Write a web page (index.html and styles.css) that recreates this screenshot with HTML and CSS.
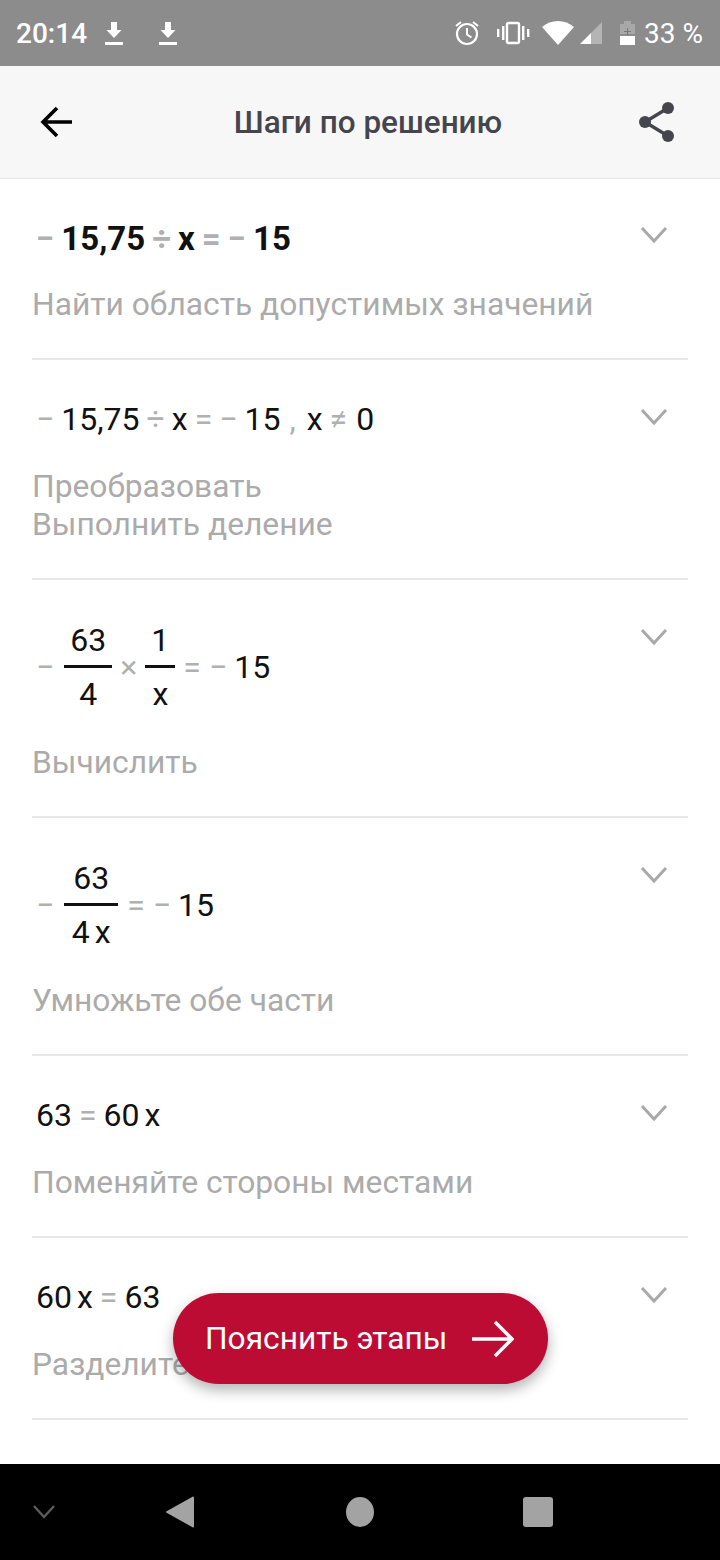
FILE: index.html
```html
<!DOCTYPE html>
<html lang="ru">
<head>
    <meta charset="UTF-8">
    <meta name="viewport" content="width=device-width, initial-scale=1.0">
    <title>Шаги по решению</title>
    <link rel="stylesheet" href="styles.css">
</head>
<body>
    <div class="app">
        <div class="status-bar">
            <span class="status-time">20:14</span>
            <svg class="dl-icon" width="18" height="26" viewBox="0 0 18 26"><path d="M6 2h6v8h4.500L9 18 1.500 10H6z" fill="#fff"/><rect y="22" width="18" height="3" fill="#fff"/></svg>
            <svg class="dl-icon dl-icon-second" width="18" height="26" viewBox="0 0 18 26"><path d="M6 2h6v8h4.500L9 18 1.500 10H6z" fill="#fff"/><rect y="22" width="18" height="3" fill="#fff"/></svg>
            <div class="status-right">
                <svg class="alarm-icon" width="24" height="26" viewBox="0 0 24 26" fill="none" stroke="#fff"><circle cx="12" cy="14" r="10" stroke-width="2.2"/><path d="M12 8v6.500l4.500 3M1 6l5-4M23 6l-5-4" stroke-width="2"/></svg>
                <svg class="vib-icon" width="34" height="24" viewBox="0 0 34 24" fill="none"><rect x="11" y="2" width="12" height="20" rx="1.500" stroke="#fff" stroke-width="2.400"/><path d="M6 5h2.400v14H6zM26 5h2.400v14H26zM1 8h2.400v8H1zM31 8h2.400v8H31z" fill="#fff"/></svg>
                <svg class="wifi-icon" width="32" height="26" viewBox="0 0 32 26"><path d="M0 7C9 -1 23 -1 32 7L16 25z" fill="#fff"/></svg>
                <svg class="signal-icon" width="23" height="24" viewBox="0 0 23 24"><path d="M23 1v22H12V12z" fill="#b4b4b4"/><path d="M12 12v11H1z" fill="#fff"/></svg>
                <svg class="battery-icon" width="15" height="26" viewBox="0 0 15 26"><path d="M4 1h7v3h4v10H0V4h4z" fill="#a8a8a8"/><rect y="16" width="15" height="9" fill="#fff"/><path d="M7 8h1v3h3v1H8v3H7v-3H4v-1h3z" fill="#777"/></svg>
                <span class="status-pct">33 %</span>
            </div>
        </div>

        <div class="header">
            <svg width="34" height="32" viewBox="0 0 34 32" fill="none" stroke="#000" stroke-width="3.600"><path d="M33 16H4M18 2L4 16l14 14"/></svg>
            <div class="header-title">Шаги по решению</div>
            <svg width="38" height="42" viewBox="0 0 38 42" fill="#45454d" stroke="#45454d"><path d="M30 7L7 21l23 14" fill="none" stroke-width="3.400"/><circle cx="30" cy="7" r="6" stroke="none"/><circle cx="7" cy="21" r="6" stroke="none"/><circle cx="30" cy="35" r="6" stroke="none"/></svg>
        </div>

        <div class="steps">
            <div class="step">
                <div class="step-body">
                    <div class="expr expr-bold">
                        <span class="op">−</span><span>15,75</span><span class="op">÷</span><span>x</span><span class="op">=</span><span class="op">−</span><span>15</span>
                    </div>
                    <div class="step-label">Найти область допустимых значений</div>
                </div>
                <svg class="chevron" width="28" height="18" viewBox="0 0 28 18" fill="none" stroke="#a9a9a9" stroke-width="3"><path d="M2 2l12 13L26 2"/></svg>
            </div>

            <div class="step">
                <div class="step-body">
                    <div class="expr">
                        <span class="op">−</span><span>15,75</span><span class="op">÷</span><span>x</span><span class="op">=</span><span class="op">−</span><span>15</span><span class="op comma">,</span><span>x</span><span class="op">≠</span><span class="last-num">0</span>
                    </div>
                    <div class="step-label">Преобразовать<br>Выполнить деление</div>
                </div>
                <svg class="chevron" width="28" height="18" viewBox="0 0 28 18" fill="none" stroke="#a9a9a9" stroke-width="3"><path d="M2 2l12 13L26 2"/></svg>
            </div>

            <div class="step">
                <div class="step-body">
                    <div class="expr expr-frac">
                        <span class="op lead-minus">−</span>
                        <div class="frac"><span class="frac-top">63</span><span class="frac-bottom">4</span></div>
                        <span class="op">×</span>
                        <div class="frac"><span class="frac-top">1</span><span class="frac-bottom">x</span></div>
                        <span class="op">=</span><span class="op">−</span><span class="tight">15</span>
                    </div>
                    <div class="step-label">Вычислить</div>
                </div>
                <svg class="chevron" width="28" height="18" viewBox="0 0 28 18" fill="none" stroke="#a9a9a9" stroke-width="3"><path d="M2 2l12 13L26 2"/></svg>
            </div>

            <div class="step">
                <div class="step-body">
                    <div class="expr expr-frac">
                        <span class="op lead-minus">−</span>
                        <div class="frac frac-wide"><span class="frac-top">63</span><span class="frac-bottom">4<span class="var-gap">x</span></span></div>
                        <span class="op">=</span><span class="op">−</span><span class="tight">15</span>
                    </div>
                    <div class="step-label">Умножьте обе части</div>
                </div>
                <svg class="chevron" width="28" height="18" viewBox="0 0 28 18" fill="none" stroke="#a9a9a9" stroke-width="3"><path d="M2 2l12 13L26 2"/></svg>
            </div>

            <div class="step">
                <div class="step-body">
                    <div class="expr">
                        <span>63</span><span class="op">=</span><span>60<span class="var-gap">x</span></span>
                    </div>
                    <div class="step-label">Поменяйте стороны местами</div>
                </div>
                <svg class="chevron" width="28" height="18" viewBox="0 0 28 18" fill="none" stroke="#a9a9a9" stroke-width="3"><path d="M2 2l12 13L26 2"/></svg>
            </div>

            <div class="step">
                <div class="step-body">
                    <div class="expr">
                        <span>60<span class="var-gap">x</span></span><span class="op">=</span><span>63</span>
                    </div>
                    <div class="step-label">Разделите</div>
                </div>
                <svg class="chevron" width="28" height="18" viewBox="0 0 28 18" fill="none" stroke="#a9a9a9" stroke-width="3"><path d="M2 2l12 13L26 2"/></svg>
            </div>
        </div>

        <button class="explain-btn">
            Пояснить этапы
            <svg width="42" height="38" viewBox="0 0 42 38" fill="none" stroke="#fff" stroke-width="3.400"><path d="M0 19h39M23 2l17 17-17 17"/></svg>
        </button>

        <div class="nav-bar">
            <svg class="nav-down" width="22" height="14" viewBox="0 0 22 14" fill="none" stroke="#5c5c5c" stroke-width="2.400"><path d="M1 1l10 11L21 1"/></svg>
            <svg class="nav-back" width="30" height="34" viewBox="0 0 30 34"><path d="M28 1.500Q29 1 29 3V31Q29 33 28 32.500L2 18Q0 17 2 16z" fill="#a3a3a3"/></svg>
            <svg class="nav-home" width="28" height="30" viewBox="0 0 28 30"><ellipse cx="14" cy="15" rx="14" ry="15" fill="#a3a3a3"/></svg>
            <svg class="nav-recent" width="30" height="30" viewBox="0 0 30 30"><rect width="30" height="30" rx="3" fill="#a3a3a3"/></svg>
        </div>
    </div>
</body>
</html>
```

FILE: styles.css
```css
* {
    box-sizing: border-box;
}

body {
    margin: 0;
    font-family: Roboto, "Noto Sans", sans-serif;
    background-color: #fff;
}

.app {
    position: relative;
    display: flex;
    flex-direction: column;
    width: 720px;
    height: 1560px;
    overflow: hidden;
}

.status-bar {
    display: flex;
    align-items: center;
    flex-shrink: 0;
    height: 66px;
    padding: 0 17px 0 16px;
    background-color: #8c8c8c;
    color: #fff;
}

.status-time {
    font-size: 28px;
    font-weight: 500;
}

.dl-icon {
    margin-left: 18px;
}

.dl-icon-second {
    margin-left: 36px;
}

.status-right {
    display: flex;
    align-items: center;
    margin-left: auto;
}

.vib-icon {
    margin-left: 17px;
}

.wifi-icon {
    margin-left: 12px;
}

.signal-icon {
    margin-left: 5px;
}

.battery-icon {
    margin-left: 18px;
}

.status-pct {
    margin-left: 9px;
    font-size: 28px;
}

.header {
    display: flex;
    align-items: center;
    justify-content: space-between;
    flex-shrink: 0;
    height: 113px;
    padding: 0 44px 0 39px;
    background-color: #f7f7f7;
    border-bottom: 1px solid #e6e6e6;
}

.header-title {
    margin-left: 25px;
    font-size: 31.5px;
    font-weight: 500;
    color: #45454d;
}

.steps {
    flex: 1;
    padding: 0 32px;
}

.step {
    display: flex;
    justify-content: space-between;
    align-items: flex-start;
    border-bottom: 2px solid #e8e8e8;
    padding: 39px 0 0;
}

.step:first-child {
    padding-top: 38px;
}

.step-body {
    padding-bottom: 34px;
}

.expr {
    display: flex;
    align-items: center;
    gap: 7px;
    height: 40px;
    padding-left: 4px;
    font-size: 32px;
    line-height: 40px;
    color: #111;
}

.expr-bold {
    padding-top: 4px;
    font-size: 33px;
    font-weight: 700;
}

.expr-frac {
    gap: 8px;
    height: 96px;
}

.op {
    color: #b0b0b0;
}

.comma {
    margin: 0 4px 0 2px;
}

.last-num {
    margin-left: 2px;
}

.lead-minus {
    margin-right: 2px;
}

.tight {
    margin-left: -1px;
}

.var-gap {
    margin-left: 5px;
}

.frac {
    display: flex;
    flex-direction: column;
    align-items: stretch;
    text-align: center;
}

.frac-top {
    padding: 0 6px 5px;
    border-bottom: 3px solid #111;
}

.frac-bottom {
    padding: 6px 6px 0;
}

.frac-wide {
    margin-right: 1px;
}

.frac-wide .frac-bottom {
    padding: 6px 7.5px 0;
}

.step-label {
    margin-top: 29px;
    font-size: 31.75px;
    line-height: 38px;
    color: #ababab;
}

.chevron {
    margin: 9px 20px 0 0;
}

.explain-btn {
    position: absolute;
    left: 173px;
    top: 1293px;
    display: flex;
    align-items: center;
    gap: 25px;
    width: 375px;
    height: 91px;
    padding: 0 0 0 32px;
    border: none;
    border-radius: 46px;
    background-color: #bd0c33;
    box-shadow: 0 6px 14px rgba(0, 0, 0, 0.3);
    color: #fff;
    font-family: inherit;
    font-size: 31.7px;
}

.nav-bar {
    display: flex;
    align-items: center;
    flex-shrink: 0;
    height: 96px;
    padding-left: 33px;
    background-color: #000;
}

.nav-back {
    margin-left: 110px;
}

.nav-home {
    margin-left: 151px;
}

.nav-recent {
    margin-left: 149px;
}
```
